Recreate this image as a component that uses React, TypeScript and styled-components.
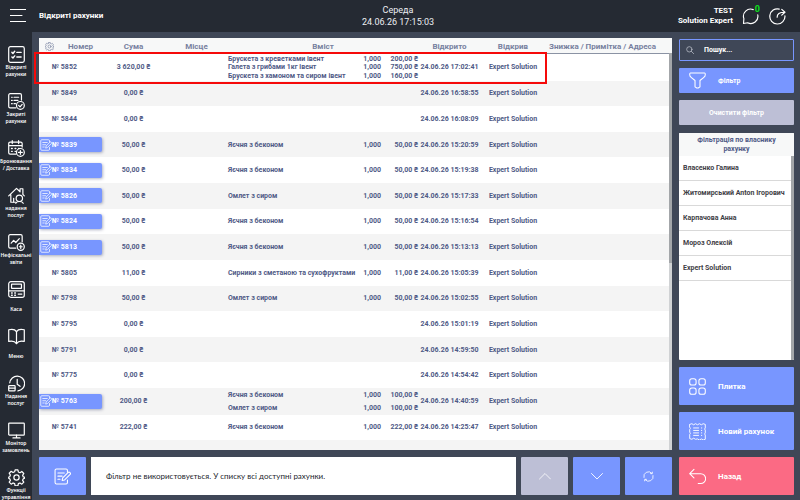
import React from "react";
import styled, { createGlobalStyle, css } from "styled-components";

const color = {
  dark: "#252a33",
  base: "#3f4757",
  blue: "#7896ff",
  muted: "#bdbfd6",
  danger: "#fb6a84",
  ink: "#4f5a86",
  head: "#77819f",
  stripe: "#f4f4f4",
  panelHead: "#f7f8f8",
};

const GlobalStyle = createGlobalStyle`
  *, *::before, *::after { box-sizing: border-box; }
  body { margin: 0; background: ${color.base}; }
  body, button, input { font-family: Roboto, "Noto Sans", sans-serif; }
  button { border: 0; padding: 0; margin: 0; background: none; color: inherit; cursor: pointer; }
  ul { list-style: none; margin: 0; padding: 0; }
`;

const Page = styled.div`
  display: grid;
  grid-template-rows: 32px minmax(0, 1fr);
  height: 100vh;
  overflow: hidden;
`;

const TopBar = styled.header`
  display: grid;
  grid-template-columns: 1fr auto 1fr;
  align-items: center;
  padding: 0 14px 0 10px;
  background: ${color.dark};
  color: #fff;
`;

const TopLeft = styled.div`
  display: flex;
  align-items: center;
  gap: 13px;
`;

const PageTitle = styled.h1`
  margin: 0;
  font-size: 8px;
  line-height: 12px;
  font-weight: 700;
`;

const Clock = styled.div`
  text-align: center;
  font-size: 9px;
  line-height: 12px;
  color: #eceef2;
`;

const TopRight = styled.div`
  display: flex;
  align-items: center;
  justify-content: flex-end;
  gap: 9px;
`;

const Account = styled.div`
  text-align: right;
  font-size: 8px;
  line-height: 10px;
  font-weight: 700;
`;

const IconButton = styled.button`
  position: relative;
  display: flex;
`;

const Badge = styled.span`
  position: absolute;
  top: -4px;
  right: 0;
  font-size: 9px;
  line-height: 12px;
  font-weight: 700;
  color: #0be01b;
`;

const Body = styled.div`
  display: grid;
  grid-template-columns: 32px minmax(0, 1fr);
  min-height: 0;
`;

const Sidebar = styled.nav`
  display: flex;
  flex-direction: column;
  gap: 15px;
  padding-top: 14px;
  background: ${color.dark};
`;

const NavButton = styled.button`
  display: flex;
  flex-direction: column;
  align-items: center;
  gap: 1px;
  color: #fff;
  font-family: "Noto Sans", sans-serif;
`;

const NavLabel = styled.span`
  display: flex;
  align-items: flex-end;
  justify-content: center;
  height: 14px;
  font-size: 5px;
  line-height: 7px;
  font-weight: 600;
  white-space: pre-line;
`;

const Workspace = styled.main`
  display: grid;
  grid-template-columns: minmax(0, 1fr) 115px;
  gap: 7px;
  padding: 6px 6px 6px 7px;
  min-height: 0;
`;

const Column = styled.div`
  display: flex;
  flex-direction: column;
  gap: 7px;
  min-height: 0;
`;

const SideColumn = styled(Column)`
  padding-top: 1px;
`;

const TablePanel = styled.section`
  position: relative;
  flex: 1;
  min-height: 0;
`;

const TableViewport = styled.div`
  height: 100%;
  overflow: hidden;
  background: #fff;
`;

const Table = styled.table`
  width: 100%;
  height: 428px;
  table-layout: fixed;
  border-collapse: collapse;
  font-size: 7px;
  line-height: 8px;
  font-weight: 700;
  color: ${color.ink};
`;

const Col = styled.col<{ $w?: number }>`
  ${(p) => p.$w && `width: ${p.$w}px;`}
`;

const HeadRow = styled.tr`
  height: 16px;
  background: ${color.panelHead};
  box-shadow: inset 0 -1px 0 #8b93a4;
`;

const Th = styled.th`
  padding: 0;
  height: 16px;
  font-size: 8px;
  line-height: 15px;
  font-weight: 700;
  color: ${color.head};
  white-space: nowrap;
`;

const ThLast = styled(Th)`
  padding-right: 12px;
`;

const GearHolder = styled.span`
  display: flex;
  justify-content: center;
`;

const Row = styled.tr`
  height: 25px;
  &:nth-child(even) {
    background: ${color.stripe};
  }
`;

const Td = styled.td<{ $center?: boolean }>`
  padding: 0;
  white-space: nowrap;
  text-align: ${(p) => (p.$center ? "center" : "left")};
`;

const NumberText = styled.span`
  padding-left: 13px;
`;

const NumberButton = styled.button`
  display: flex;
  align-items: center;
  width: 63px;
  height: 15px;
  padding-left: 1px;
  border-radius: 0 2px 2px 0;
  background: ${color.blue};
  box-shadow: 1px 1px 3px rgba(60, 70, 110, 0.4);
  color: #fff;
  font-size: 7px;
  font-weight: 700;
`;

const Dishes = styled.ul<{ $many: boolean }>`
  display: grid;
  grid-auto-rows: minmax(0, 1fr);
  ${(p) =>
    p.$many &&
    css`
      height: 26px;
    `}
`;

const Dish = styled.li`
  display: grid;
  grid-template-columns: 1fr 24px 37px;
  align-items: center;
  text-align: right;
`;

const DishName = styled.span`
  text-align: left;
`;

const Track = styled.span<{ $top: number }>`
  position: absolute;
  top: ${(p) => p.$top}px;
  right: 0;
  bottom: 0;
  width: 3px;
  background: #d0d2d4;
`;

const Thumb = styled.span<{ $part: number }>`
  display: block;
  height: ${(p) => p.$part}%;
  background: #a3a6a9;
`;

const Highlight = styled.div`
  position: absolute;
  top: 14px;
  left: -5px;
  width: 513px;
  height: 32px;
  border: 2px solid #f50a0a;
  pointer-events: none;
`;

const Footer = styled.div`
  display: grid;
  grid-template-columns: 47px minmax(0, 1fr) 47px 47px 47px;
  gap: 5px;
  height: 38px;
`;

const Tile = styled.button<{ $tone?: string }>`
  display: flex;
  align-items: center;
  justify-content: center;
  border-radius: 1px;
  background: ${(p) => p.$tone ?? color.blue};
  color: #fff;
`;

const Message = styled.p`
  display: flex;
  align-items: center;
  margin: 0;
  padding-left: 15px;
  background: #fff;
  color: #23262d;
  font-family: Lato, "Noto Sans", sans-serif;
  font-size: 8px;
  line-height: 12px;
`;

const SearchBox = styled.label`
  display: flex;
  align-items: center;
  gap: 10px;
  height: 22px;
  padding-left: 6px;
  border: 1px solid ${color.blue};
  border-radius: 1px;
  color: #c9cdd6;
`;

const SearchInput = styled.input`
  flex: 1;
  min-width: 0;
  padding: 0;
  border: 0;
  outline: 0;
  background: none;
  color: #fff;
  font-size: 7px;
  font-weight: 700;
  &::placeholder {
    color: #fff;
    opacity: 1;
  }
`;

const Action = styled.button<{ $tone?: string; $tall?: boolean }>`
  display: grid;
  grid-template-columns: 17px 1fr;
  align-items: center;
  gap: 12px;
  flex: none;
  height: ${(p) => (p.$tall ? 38 : 25)}px;
  padding-left: 10px;
  border-radius: 1px;
  background: ${(p) => p.$tone ?? color.blue};
  color: #fff;
  font-size: ${(p) => (p.$tall ? 8 : 7)}px;
  font-weight: 700;
  text-align: left;
`;

const ClearButton = styled(Tile)`
  flex: none;
  height: 25px;
  font-size: 7px;
  font-weight: 700;
`;

const OwnerPanel = styled.section`
  position: relative;
  flex: 1;
  min-height: 0;
  margin-top: 1px;
  border-radius: 1px;
  overflow: hidden;
  background: #fff;
`;

const OwnerTitle = styled.h2`
  margin: 0;
  padding: 3px 16px 2px;
  background: ${color.panelHead};
  color: ${color.ink};
  font-size: 7px;
  line-height: 9px;
  font-weight: 700;
  text-align: center;
`;

const Owner = styled.button`
  display: block;
  width: 100%;
  height: 25px;
  padding-left: 4px;
  border-bottom: 1px solid #d9d9d9;
  color: #3f4146;
  font-size: 7px;
  font-weight: 700;
  text-align: left;
  white-space: nowrap;
`;

type IconProps = {
  size?: number;
  box?: number;
  weight?: number;
  children: React.ReactNode;
};

const Icon = ({ size = 17, box = 24, weight = 1.7, children }: IconProps) => (
  <svg
    width={size}
    height={size}
    viewBox={`0 0 ${box} ${box}`}
    fill="none"
    stroke="currentColor"
    strokeWidth={weight}
    strokeLinecap="round"
    strokeLinejoin="round"
    aria-hidden="true"
  >
    {children}
  </svg>
);

const gearPath =
  "M10 1.200h4l.6 3 2.300 1 2.600-1.700 2.800 2.800-1.700 2.600 1 2.300 2.200.5v1.200l-2.200.8-1 2.300 1.700 2.600-2.800 2.800-2.600-1.700-2.300 1-.6 3h-4l-.6-3-2.300-1-2.600 1.700-2.800-2.800 1.700-2.600-1-2.300-1.400-.5v-1.800l1.400-.5 1-2.300-1.700-2.600 2.800-2.800 2.600 1.700 2.300-1z";

const NoteIcon = ({ size, weight }: { size: number; weight?: number }) => (
  <Icon size={size} weight={weight ?? 1.5}>
    <path d="M19 6V3.500a2 2 0 0 0-2-2H3.500a2 2 0 0 0-2 2v17a2 2 0 0 0 2 2H17a2 2 0 0 0 2-2V17" />
    <path d="M5.500 7h9M5.500 11.500h6M5.500 16h3" />
    <path d="M11.500 17.500l.8-3.500 7.700-7.700a1.600 1.600 0 0 1 2.300 0l.5.500a1.600 1.600 0 0 1 0 2.300L15 16.800z" />
  </Icon>
);

const navItems: { label: string; icon: React.ReactNode }[] = [
  {
    label: "Відкриті\nрахунки",
    icon: (
      <>
        <rect x="1" y="1" width="22" height="22" rx="2.500" />
        <path d="M5.500 9l1.500 1.500L9.500 7.500M5.500 15.500L7 17l2.500-3M12.500 9h6M12.500 15.500h6" strokeWidth="2" />
      </>
    ),
  },
  {
    label: "Закриті\nрахунки",
    icon: (
      <>
        <path d="M11 21H3a2 2 0 0 1-2-2V3a2 2 0 0 1 2-2h14a2 2 0 0 1 2 2v7" />
        <path d="M5 6h1M8.500 6H15M5 10.500h1M8.500 10.500H14M5 15h1M8.500 15h2" />
        <circle cx="17.500" cy="17.500" r="5.500" />
        <path d="M15 17.500l2 2 3-3.500" />
      </>
    ),
  },
  {
    label: "Бронювання\n/ Доставка",
    icon: (
      <>
        <path d="M11 20H3a2 2 0 0 1-2-2V5a2 2 0 0 1 2-2h15a2 2 0 0 1 2 2v5M1 8h19M6 1v4M15 1v4" />
        <path d="M5 12h1M10 12h1M5 16h1M10 16h.5M15 12h.5" strokeWidth="2" />
        <circle cx="17.500" cy="17.500" r="5.500" />
        <path d="M17.500 14.800v5.400M14.800 17.500h5.400" />
      </>
    ),
  },
  {
    label: "надання\nпослуг",
    icon: (
      <>
        <path d="M1 12.500L12 2l5 4.700V2.500h4v8l2 2M4 11v10.500h7" />
        <circle cx="16" cy="16" r="4.500" />
        <path d="M11 23c1-2 2.500-2.500 5-2.500s4.500.5 5.500 2.500M8 21v-5" />
      </>
    ),
  },
  {
    label: "Нефіскальні\nзвіти",
    icon: (
      <>
        <path d="M11 20H3a2 2 0 0 1-2-2V3a2 2 0 0 1 2-2h15a2 2 0 0 1 2 2v8" />
        <path d="M4.500 13l3.500-4 3 3 5-5.500" />
        <circle cx="18" cy="18" r="5" />
        <path d="M18 15.500v5M16 18h4" />
      </>
    ),
  },
  {
    label: "Каса",
    icon: (
      <>
        <rect x="1" y="1" width="22" height="22" rx="3" />
        <rect x="5" y="4.500" width="14" height="6" rx="0.500" />
        <path d="M1 14h22" />
        <path d="M5 17h1M9.500 17h1M5 20h1M9.500 20h1M14.500 18.500h5" strokeWidth="2" />
      </>
    ),
  },
  {
    label: "Меню",
    icon: (
      <>
        <path d="M12 5C10 2 5 1.500 1 2.500V19c4-1 9 0 11 3 2-3 7-4 11-3V2.500c-4-1-9-.5-11 2.500z" />
        <path d="M12 5v17" />
      </>
    ),
  },
  {
    label: "Надання\nпослуг",
    icon: (
      <>
        <path d="M2.500 11A10.500 10.500 0 1 1 14 22.500" />
        <path d="M13 6v7l4 3" />
        <rect x="1" y="15" width="9" height="7.500" rx="1" />
        <path d="M1 18.500h9" />
      </>
    ),
  },
  {
    label: "Монітор\nзамовлень",
    icon: (
      <>
        <rect x="1" y="1.500" width="22" height="17" rx="1" />
        <path d="M12 18.500v4M7 22.500h10" />
      </>
    ),
  },
  {
    label: "Функції\nуправління",
    icon: (
      <>
        <path d={gearPath} />
        <circle cx="12" cy="12" r="3.700" />
      </>
    ),
  },
];

type Order = {
  no: string;
  sum: string;
  opened: string;
  tagged?: boolean;
  dishes: [string, string][];
};

const egg = "Яєчня з беконом";
const omelet = "Омлет з сиром";

const orders: Order[] = [
  {
    no: "5852",
    sum: "3 620,00",
    opened: "17:02:41",
    dishes: [
      ["Брускета з креветками івент", "200,00"],
      ["Галета з грибами 1кг івент", "750,00"],
      ["Брускета з хамоном та сиром івент", "160,00"],
    ],
  },
  { no: "5849", sum: "0,00", opened: "16:58:55", dishes: [] },
  { no: "5844", sum: "0,00", opened: "16:08:09", dishes: [] },
  { no: "5839", sum: "50,00", opened: "15:20:59", tagged: true, dishes: [[egg, "50,00"]] },
  { no: "5834", sum: "50,00", opened: "15:19:38", tagged: true, dishes: [[egg, "50,00"]] },
  { no: "5826", sum: "50,00", opened: "15:17:33", tagged: true, dishes: [[omelet, "50,00"]] },
  { no: "5824", sum: "50,00", opened: "15:16:54", tagged: true, dishes: [[egg, "50,00"]] },
  { no: "5813", sum: "50,00", opened: "15:13:13", tagged: true, dishes: [[egg, "50,00"]] },
  { no: "5805", sum: "11,00", opened: "15:05:39", dishes: [["Сирники з сметаною та сухофруктами", "11,00"]] },
  { no: "5798", sum: "50,00", opened: "15:02:55", dishes: [[omelet, "50,00"]] },
  { no: "5795", sum: "0,00", opened: "15:01:19", dishes: [] },
  { no: "5791", sum: "0,00", opened: "14:59:50", dishes: [] },
  { no: "5775", sum: "0,00", opened: "14:54:42", dishes: [] },
  {
    no: "5763",
    sum: "200,00",
    opened: "14:40:59",
    tagged: true,
    dishes: [
      [egg, "100,00"],
      [omelet, "100,00"],
    ],
  },
  { no: "5741", sum: "222,00", opened: "14:25:47", dishes: [[egg, "222,00"]] },
];

const owners = [
  "Власенко Галина",
  "Житомирський Anton Ігорович",
  "Карпачова Анна",
  "Мороз Олексій",
  "Expert Solution",
];

const OrderRow = ({ order }: { order: Order }) => (
  <Row>
    <Td colSpan={2}>
      {order.tagged ? (
        <NumberButton>
          <NoteIcon size={12} />№ {order.no}
        </NumberButton>
      ) : (
        <NumberText>№ {order.no}</NumberText>
      )}
    </Td>
    <Td $center>{order.sum} ₴</Td>
    <Td />
    <Td>
      <Dishes $many={order.dishes.length > 1}>
        {order.dishes.map(([name, price]) => (
          <Dish key={name}>
            <DishName>{name}</DishName>
            <span>1,000</span>
            <span>{price} ₴</span>
          </Dish>
        ))}
      </Dishes>
    </Td>
    <Td $center>24.06.26 {order.opened}</Td>
    <Td $center>Expert Solution</Td>
    <Td />
  </Row>
);

export default function App() {
  return (
    <Page>
      <GlobalStyle />
      <TopBar>
        <TopLeft>
          <IconButton aria-label="Головне меню">
            <Icon size={16} box={16} weight={1}>
              <path d="M0 1.500h16M0 7.500h12M0 13.500h16" />
            </Icon>
          </IconButton>
          <PageTitle>Відкриті рахунки</PageTitle>
        </TopLeft>
        <Clock>
          <div>Середа</div>
          <div>24.06.26 17:15:03</div>
        </Clock>
        <TopRight>
          <Account>
            <div>TEST</div>
            <div>Solution Expert</div>
          </Account>
          <IconButton aria-label="Повідомлення">
            <Icon size={18} weight={1.500}>
              <path d="M15 3.500a9.500 9.500 0 0 0-12.500 12L2 22l5.500-1A9.500 9.500 0 0 0 21 10.500" />
            </Icon>
            <Badge>0</Badge>
          </IconButton>
          <IconButton aria-label="Вийти">
            <Icon size={17} weight={1.700}>
              <path d="M14.500 1.500A10.700 10.700 0 1 0 22.500 11" />
              <path d="M11.500 13c0-4.500 3-7 10.500-7M18 2l4.500 4L18 10" />
            </Icon>
          </IconButton>
        </TopRight>
      </TopBar>

      <Body>
        <Sidebar>
          {navItems.map((item, i) => (
            <NavButton key={i}>
              <Icon>{item.icon}</Icon>
              <NavLabel>{item.label}</NavLabel>
            </NavButton>
          ))}
        </Sidebar>

        <Workspace>
          <Column>
            <TablePanel>
              <TableViewport>
                <Table>
                  <colgroup>
                    <Col $w={20} />
                    <Col $w={43} />
                    <Col $w={63} />
                    <Col $w={63} />
                    <Col $w={190} />
                    <Col $w={63} />
                    <Col $w={64} />
                    <Col />
                  </colgroup>
                  <thead>
                    <HeadRow>
                      <Th aria-label="Налаштування">
                        <GearHolder>
                          <Icon size={9} weight={1.800}>
                            <path d={gearPath} />
                            <circle cx="12" cy="12" r="4" />
                          </Icon>
                        </GearHolder>
                      </Th>
                      <Th>Номер</Th>
                      <Th>Сума</Th>
                      <Th>Місце</Th>
                      <Th>Вміст</Th>
                      <Th>Відкрито</Th>
                      <Th>Відкрив</Th>
                      <ThLast>Знижка / Примітка / Адреса</ThLast>
                    </HeadRow>
                  </thead>
                  <tbody>
                    {orders.map((order) => (
                      <OrderRow key={order.no} order={order} />
                    ))}
                    <Row>
                      <Td colSpan={8} />
                    </Row>
                  </tbody>
                </Table>
              </TableViewport>
              <Track $top={15}>
                <Thumb $part={53} />
              </Track>
              <Highlight />
            </TablePanel>

            <Footer>
              <Tile aria-label="Примітка">
                <NoteIcon size={17} />
              </Tile>
              <Message>Фільтр не використовується. У списку всі доступні рахунки.</Message>
              <Tile $tone={color.muted} aria-label="Вгору">
                <Icon size={12} weight={1.600}>
                  <path d="M1 18L12 7l11 11" />
                </Icon>
              </Tile>
              <Tile aria-label="Вниз">
                <Icon size={12} weight={1.800}>
                  <path d="M1 7l11 11L23 7" />
                </Icon>
              </Tile>
              <Tile aria-label="Оновити">
                <Icon size={11} weight={1.800}>
                  <path d="M2 14A10.200 10.200 0 0 1 19.500 5M22 10a10.200 10.200 0 0 1-17.500 9M20.500 2.500l-.5 3.500-3.500-.3M3.500 21.500l.5-3.500 3.500.3" />
                </Icon>
              </Tile>
            </Footer>
          </Column>

          <SideColumn>
            <SearchBox>
              <Icon size={8} weight={2}>
                <circle cx="10" cy="10" r="8" />
                <path d="M16 16l7 7" />
              </Icon>
              <SearchInput type="search" placeholder="Пошук..." aria-label="Пошук" />
            </SearchBox>
            <Action>
              <Icon size={17} weight={1.500}>
                <path d="M2 1.500h20c1 0 1 1 1 2 0 2-.5 3-2 4L15.500 12v9L13 22.500h-2L8.500 21v-9L3 7.500C1.500 6.500 1 5.500 1 3.500c0-1 0-2 1-2z" />
              </Icon>
              Фільтр
            </Action>
            <ClearButton $tone={color.muted}>Очистити фільтр</ClearButton>
            <OwnerPanel>
              <OwnerTitle>Фільтрація по власнику рахунку</OwnerTitle>
              <ul>
                {owners.map((name) => (
                  <li key={name}>
                    <Owner>{name}</Owner>
                  </li>
                ))}
              </ul>
              <Track $top={23}>
                <Thumb $part={100} />
              </Track>
            </OwnerPanel>
            <Action $tall>
              <Icon weight={1.500}>
                <rect x="1" y="1" width="9" height="9" rx="3" />
                <rect x="14" y="1" width="9" height="9" rx="3" />
                <rect x="1" y="14" width="9" height="9" rx="3" />
                <rect x="14" y="14" width="9" height="9" rx="3" />
              </Icon>
              Плитка
            </Action>
            <Action $tall>
              <Icon weight={1.300}>
                <path d="M1 2l3-1 2.500 1.500L9.300 1 12 2.500 14.700 1l2.800 1.500L20 1l3 1v5l-1 1.500 1 1.500v4l-1 1.500 1 1.500v6l-3 1-2.500-1.500-2.800 1.500-2.700-1.500L9.300 23l-2.800-1.500L4 23l-3-1v-6l1-1.500L1 13V9l1-1.500L1 6z" />
                <path d="M6.500 7h7M6.500 10.500h7M6.500 14h7M6.500 17.500h7M17.500 7h.5M17.500 10.500h.5M17.500 14h.5M17.500 17.500h.5" />
              </Icon>
              Новий рахунок
            </Action>
            <Action $tall $tone={color.danger}>
              <Icon weight={1.500}>
                <path d="M7 2L1 8l6 6M1 8h15.500a6.500 6.500 0 0 1 0 14H13" />
              </Icon>
              Назад
            </Action>
          </SideColumn>
        </Workspace>
      </Body>
    </Page>
  );
}
